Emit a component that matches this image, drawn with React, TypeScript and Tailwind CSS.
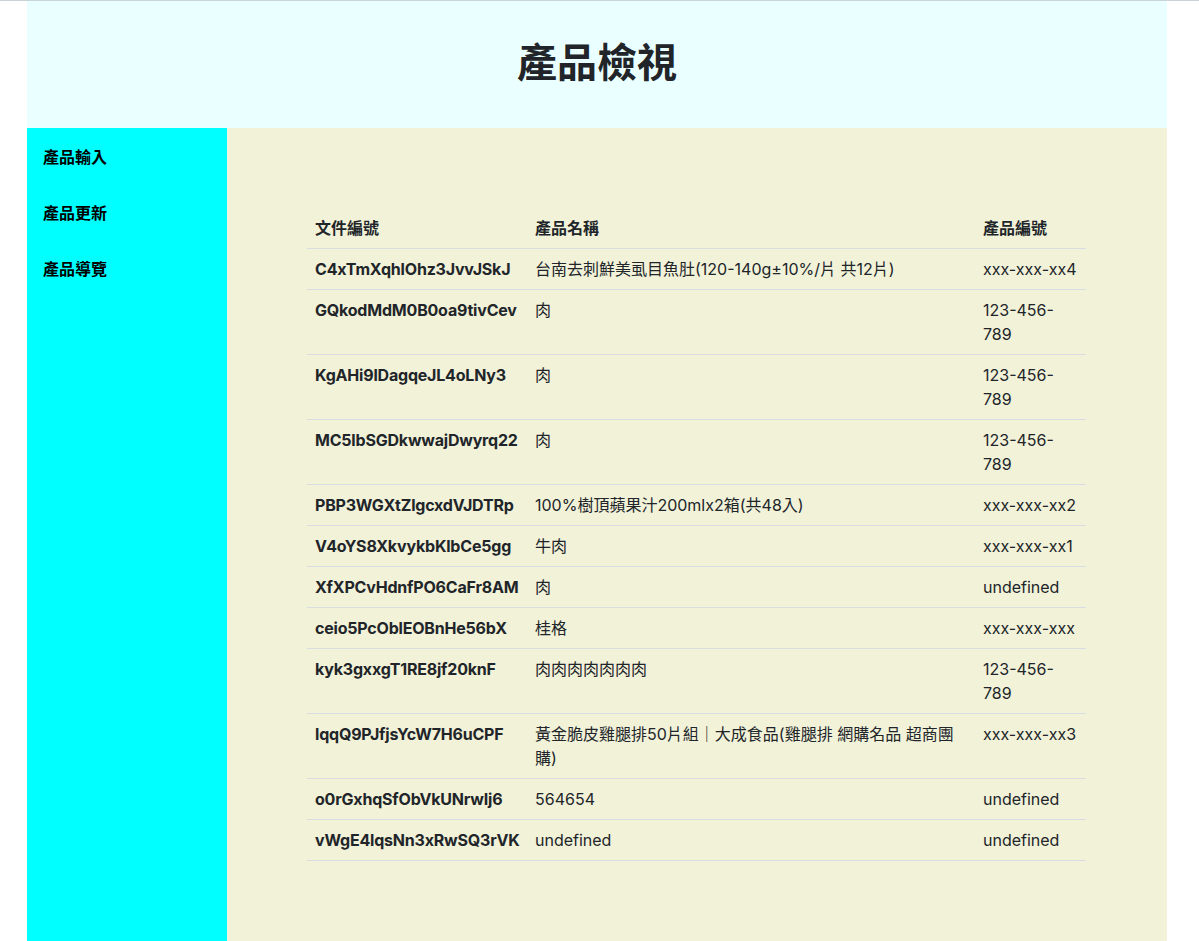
import React from "react";

const rows: [string, string, string][] = [
  ["C4xTmXqhlOhz3JvvJSkJ", "台南去刺鮮美虱目魚肚(120-140g±10%/片 共12片)", "xxx-xxx-xx4"],
  ["GQkodMdM0B0oa9tivCev", "肉", "123-456-789"],
  ["KgAHi9lDagqeJL4oLNy3", "肉", "123-456-789"],
  ["MC5lbSGDkwwajDwyrq22", "肉", "123-456-789"],
  ["PBP3WGXtZlgcxdVJDTRp", "100%樹頂蘋果汁200mlx2箱(共48入)", "xxx-xxx-xx2"],
  ["V4oYS8XkvykbKlbCe5gg", "牛肉", "xxx-xxx-xx1"],
  ["XfXPCvHdnfPO6CaFr8AM", "肉", "undefined"],
  ["ceio5PcOblEOBnHe56bX", "桂格", "xxx-xxx-xxx"],
  ["kyk3gxxgT1RE8jf20knF", "肉肉肉肉肉肉肉", "123-456-789"],
  ["lqqQ9PJfjsYcW7H6uCPF", "黃金脆皮雞腿排50片組｜大成食品(雞腿排 網購名品 超商團購)", "xxx-xxx-xx3"],
  ["o0rGxhqSfObVkUNrwIj6", "564654", "undefined"],
  ["vWgE4lqsNn3xRwSQ3rVK", "undefined", "undefined"],
];

export default function App() {
  return (
    <div
      className="min-h-[941px] bg-white border-t border-[#c9d3d8] text-[#212529] text-[16px] leading-[24px]"
      style={{ fontFamily: 'Inter, "Noto Sans CJK TC", sans-serif' }}
    >
      <div className="w-[1140px] ml-[27px] flex flex-col">
        <header className="h-[127px] bg-[#eaffff] flex items-center justify-center">
          <h1 className="text-[40px] leading-[48px] font-bold mb-[4px]">產品檢視</h1>
        </header>
        <div className="flex">
          <nav className="w-[200px] shrink-0 bg-[#00ffff] pt-[17px] px-[16px] flex flex-col gap-[32px] font-bold text-black">
            <div>產品輸入</div>
            <div>產品更新</div>
            <div>產品導覽</div>
          </nav>
          <main className="flex-1 bg-[#f2f2d9] px-[80px] py-[80px]">
            <table className="w-[779px] table-fixed border-collapse">
              <colgroup>
                <col className="w-[220px]" />
                <col className="w-[448px]" />
                <col className="w-[111px]" />
              </colgroup>
              <thead>
                <tr>
                  <th className="text-left font-bold px-[8px] py-[8px] border-b border-[#d9dde3]">文件編號</th>
                  <th className="text-left font-bold px-[8px] py-[8px] border-b border-[#d9dde3]">產品名稱</th>
                  <th className="text-left font-bold px-[8px] py-[8px] border-b border-[#d9dde3]">產品編號</th>
                </tr>
              </thead>
              <tbody>
                {rows.map((r) => (
                  <tr key={r[0]}>
                    <th className="text-left align-top font-bold px-[8px] py-[8px] border-b border-[#d9dde3] whitespace-nowrap tracking-[-0.2px]">{r[0]}</th>
                    <td className="align-top px-[8px] py-[8px] border-b border-[#d9dde3]">{r[1]}</td>
                    <td className="align-top px-[8px] py-[8px] border-b border-[#d9dde3]">{r[2]}</td>
                  </tr>
                ))}
              </tbody>
            </table>
          </main>
        </div>
      </div>
    </div>
  );
}
